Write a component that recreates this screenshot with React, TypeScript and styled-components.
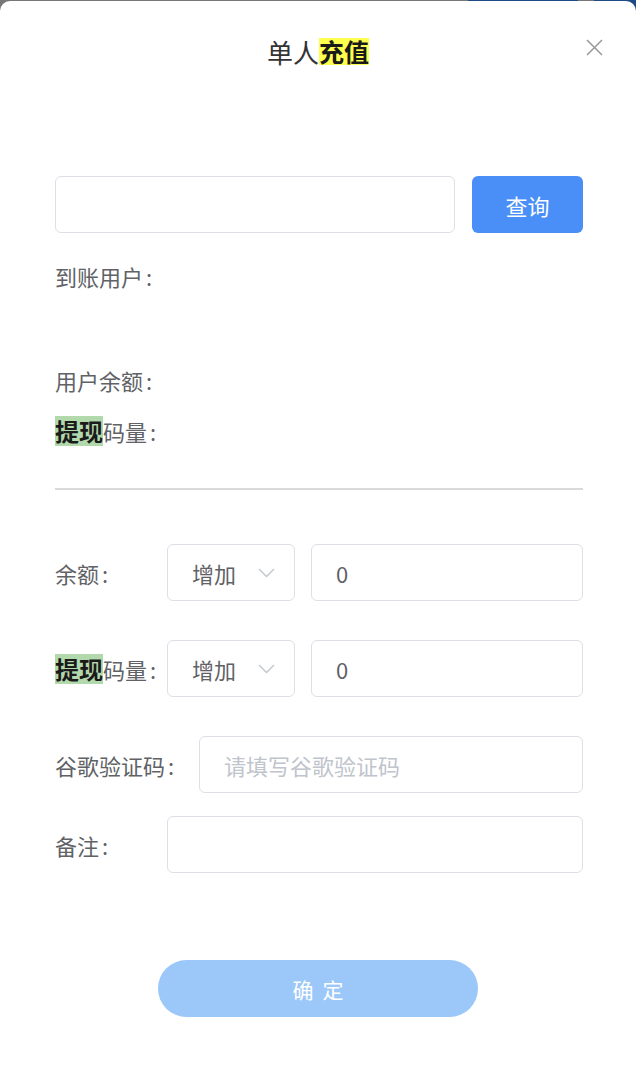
import React from 'react';
import styled, { createGlobalStyle } from 'styled-components';

const GlobalStyle = createGlobalStyle`
  html, body {
    margin: 0;
    padding: 0;
  }
  body {
    background: linear-gradient(to right, #777 0 468px, #1e4a86 468px 578px, #777 578px 594px, #1e4a86 594px);
    font-family: "Noto Sans CJK SC", "Noto Sans", sans-serif;
  }
  * {
    box-sizing: border-box;
  }
`;

const Modal = styled.div`
  margin-top: 1px;
  min-height: 1065px;
  background: #fff;
  border-radius: 10px 10px 0 0;
  padding: 0 53px 0 55px;
`;

const Header = styled.div`
  position: relative;
  padding-top: 34px;
  margin: 0 -53px 0 -55px;
`;

const Title = styled.h2`
  margin: 0;
  display: flex;
  justify-content: center;
  align-items: center;
  height: 32px;
  font-size: 26px;
  font-weight: 400;
  color: #333;
`;

const Mark = styled.span<{ $tone: 'yellow' | 'green' }>`
  display: inline-block;
  background: ${({ $tone }) => ($tone === 'yellow' ? '#ffff4d' : '#b1d9ac')};
  color: #1a1a1a;
  font-weight: 700;
  font-size: ${({ $tone }) => ($tone === 'yellow' ? '25px' : '24px')};
  height: ${({ $tone }) => ($tone === 'yellow' ? '27px' : '30px')};
  line-height: ${({ $tone }) => ($tone === 'yellow' ? '27px' : '30px')};
`;

const CloseBtn = styled.button`
  position: absolute;
  top: 37px;
  right: 33px;
  width: 18px;
  height: 18px;
  padding: 0;
  border: none;
  background: none;
  display: flex;
  align-items: center;
  justify-content: center;
`;

const SearchRow = styled.div`
  display: flex;
  gap: 17px;
  margin-top: 109px;
  height: 57px;
`;

const Field = styled.div<{ $width?: number }>`
  display: flex;
  align-items: center;
  height: 57px;
  padding: 0 24px;
  border: 1px solid #dcdfe6;
  border-radius: 6px;
  font-size: 22px;
  color: #606266;
  flex: ${({ $width }) => ($width ? `0 0 ${$width}px` : '1 1 auto')};
`;

const Placeholder = styled.span`
  color: #c0c4cc;
`;

const QueryBtn = styled.button`
  flex: 1;
  border: none;
  border-radius: 6px;
  background: #4a8ff7;
  color: #fff;
  font-family: inherit;
  font-size: 22px;
`;

const InfoLine = styled.div<{ $gap: number }>`
  display: flex;
  align-items: center;
  min-height: 28px;
  margin-top: ${({ $gap }) => $gap}px;
  font-size: 22px;
  line-height: 28px;
  color: #606266;
`;

const Colon = styled.span`
  margin-left: 3px;
`;

const Divider = styled.hr`
  margin: 42px 0 0;
  border: none;
  height: 2px;
  background: #d9d9d9;
`;

const FormRow = styled.div<{ $gap: number }>`
  display: flex;
  align-items: center;
  gap: 16px;
  margin-top: ${({ $gap }) => $gap}px;
`;

const Label = styled.label<{ $width: number }>`
  flex: 0 0 ${({ $width }) => $width - 16}px;
  min-width: 0;
  display: flex;
  align-items: center;
  font-size: 22px;
  line-height: 28px;
  color: #606266;
  white-space: nowrap;
`;

const Select = styled.div`
  flex: 0 0 128px;
  height: 57px;
  display: flex;
  align-items: center;
  justify-content: space-between;
  padding: 0 19px 0 24px;
  border: 1px solid #dcdfe6;
  border-radius: 6px;
  font-size: 22px;
  color: #606266;
`;

const Footer = styled.div`
  display: flex;
  justify-content: center;
  margin: 87px -53px 0 -55px;
`;

const SubmitBtn = styled.button`
  width: 320px;
  height: 57px;
  border: none;
  border-radius: 29px;
  background: #9bc8f8;
  color: #fff;
  font-family: inherit;
  font-size: 21px;
  letter-spacing: 9px;
  text-indent: 9px;
`;

const Chevron = () => (
  <svg width="17" height="10" viewBox="0 0 17 10">
    <polyline points="1,1 8.5,8.5 16,1" fill="none" stroke="#c0c4cc" strokeWidth="1.3" />
  </svg>
);

const App = () => {
  return (
    <>
      <GlobalStyle />
      <Modal>
        <Header>
          <Title>
            单人<Mark $tone="yellow">充值</Mark>
          </Title>
          <CloseBtn aria-label="close">
            <svg width="17" height="17" viewBox="0 0 17 17">
              <path d="M1 1 L16 16 M16 1 L1 16" stroke="#999" strokeWidth="1.5" />
            </svg>
          </CloseBtn>
        </Header>

        <SearchRow>
          <Field $width={400} />
          <QueryBtn>查询</QueryBtn>
        </SearchRow>

        <InfoLine $gap={29}>
          到账用户<Colon>:</Colon>
        </InfoLine>
        <InfoLine $gap={76}>
          用户余额<Colon>:</Colon>
        </InfoLine>
        <InfoLine $gap={22}>
          <Mark $tone="green">提现</Mark>码量<Colon>:</Colon>
        </InfoLine>

        <Divider />

        <FormRow $gap={54}>
          <Label $width={112}>
            余额<Colon>:</Colon>
          </Label>
          <Select>
            增加
            <Chevron />
          </Select>
          <Field>0</Field>
        </FormRow>

        <FormRow $gap={39}>
          <Label $width={112}>
            <Mark $tone="green">提现</Mark>码量<Colon>:</Colon>
          </Label>
          <Select>
            增加
            <Chevron />
          </Select>
          <Field>0</Field>
        </FormRow>

        <FormRow $gap={39}>
          <Label $width={144}>
            谷歌验证码<Colon>:</Colon>
          </Label>
          <Field>
            <Placeholder>请填写谷歌验证码</Placeholder>
          </Field>
        </FormRow>

        <FormRow $gap={23}>
          <Label $width={112}>
            备注<Colon>:</Colon>
          </Label>
          <Field />
        </FormRow>

        <Footer>
          <SubmitBtn>确定</SubmitBtn>
        </Footer>
      </Modal>
    </>
  );
};

export default App;
